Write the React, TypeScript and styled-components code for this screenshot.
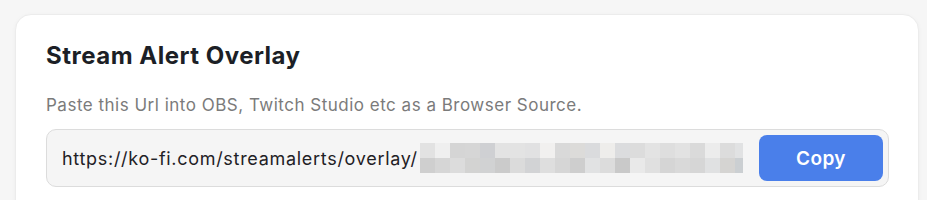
import styled, { createGlobalStyle } from "styled-components";

const GlobalStyle = createGlobalStyle`
  body {
    margin: 0;
    background: #f6f6f6;
    font-family: Inter, "Open Sans", sans-serif;
  }
`;

const Page = styled.div`
  padding: 14px 8px 0 15px;
`;

const Card = styled.section`
  background: #ffffff;
  border: 1px solid #ececec;
  border-radius: 16px;
  box-shadow: 0 1px 4px rgba(0, 0, 0, 0.04);
  padding: 27px 29px 40px 30px;
`;

const Title = styled.h2`
  margin: 0;
  font-size: 24px;
  line-height: 28px;
  font-weight: 700;
  letter-spacing: 0.5px;
  color: #1c1f26;
`;

const Hint = styled.p`
  margin: 23px 0 12px;
  font-size: 17px;
  line-height: 24px;
  letter-spacing: 0.5px;
  color: #7b7b7b;
`;

const UrlBox = styled.div`
  display: flex;
  align-items: center;
  height: 58px;
  box-sizing: border-box;
  padding: 5px 5px 5px 15px;
  background: #f5f5f5;
  border: 1px solid #dcdcdc;
  border-radius: 10px;
`;

const UrlText = styled.span`
  font-size: 18px;
  letter-spacing: 0.7px;
  color: #1f2125;
  white-space: nowrap;
`;

const Pixels = styled.div`
  display: grid;
  grid-template-columns: repeat(22, 15px);
  grid-template-rows: 15px 15px;
  width: 323px;
  overflow: hidden;
  margin-left: 2px;
`;

const Pixel = styled.div<{ $c: string }>`
  background: ${(p) => p.$c};
`;

const CopyButton = styled.button`
  margin-left: auto;
  width: 124px;
  height: 46px;
  border: none;
  border-radius: 8px;
  background: #4a7fea;
  color: #ffffff;
  font-family: inherit;
  font-size: 19px;
  font-weight: 600;
  letter-spacing: 0.4px;
  cursor: pointer;
`;

const topRow = [
  "#e2e2e2", "#efefef", "#d5d5d5", "#d6d6d6", "#cfd0d3", "#e3e3e3", "#e3e3e3", "#e1e1e2",
  "#f1f0ef", "#d9d9d9", "#dcdbd9", "#dadbdd", "#eeedeb", "#dbdcde", "#dcdcdc", "#e3e3e3",
  "#dedede", "#e2e2e2", "#dadada", "#ececec", "#dcdcdc", "#e1e2e3",
];

const bottomRow = [
  "#cfcfcf", "#d6d6d6", "#dcdcdc", "#d3d3d2", "#d1d2d3", "#cbcbcb", "#dbdbdb", "#d2d3d5",
  "#dedede", "#d6d6d6", "#cecece", "#e1e2e3", "#dcdcdc", "#c9c9c9", "#e9e9e9", "#e0e0e0",
  "#d5d5d5", "#d9d9d9", "#d6d6d6", "#e0e1e2", "#d5d4d2", "#cbcfd2",
];

export default function App() {
  return (
    <>
      <GlobalStyle />
      <Page>
        <Card>
          <Title>Stream Alert Overlay</Title>
          <Hint>Paste this Url into OBS, Twitch Studio etc as a Browser Source.</Hint>
          <UrlBox>
            <UrlText>https://ko-fi.com/streamalerts/overlay/</UrlText>
            <Pixels>
              {[...topRow, ...bottomRow].map((c, i) => (
                <Pixel key={i} $c={c} />
              ))}
            </Pixels>
            <CopyButton>Copy</CopyButton>
          </UrlBox>
        </Card>
      </Page>
    </>
  );
}
